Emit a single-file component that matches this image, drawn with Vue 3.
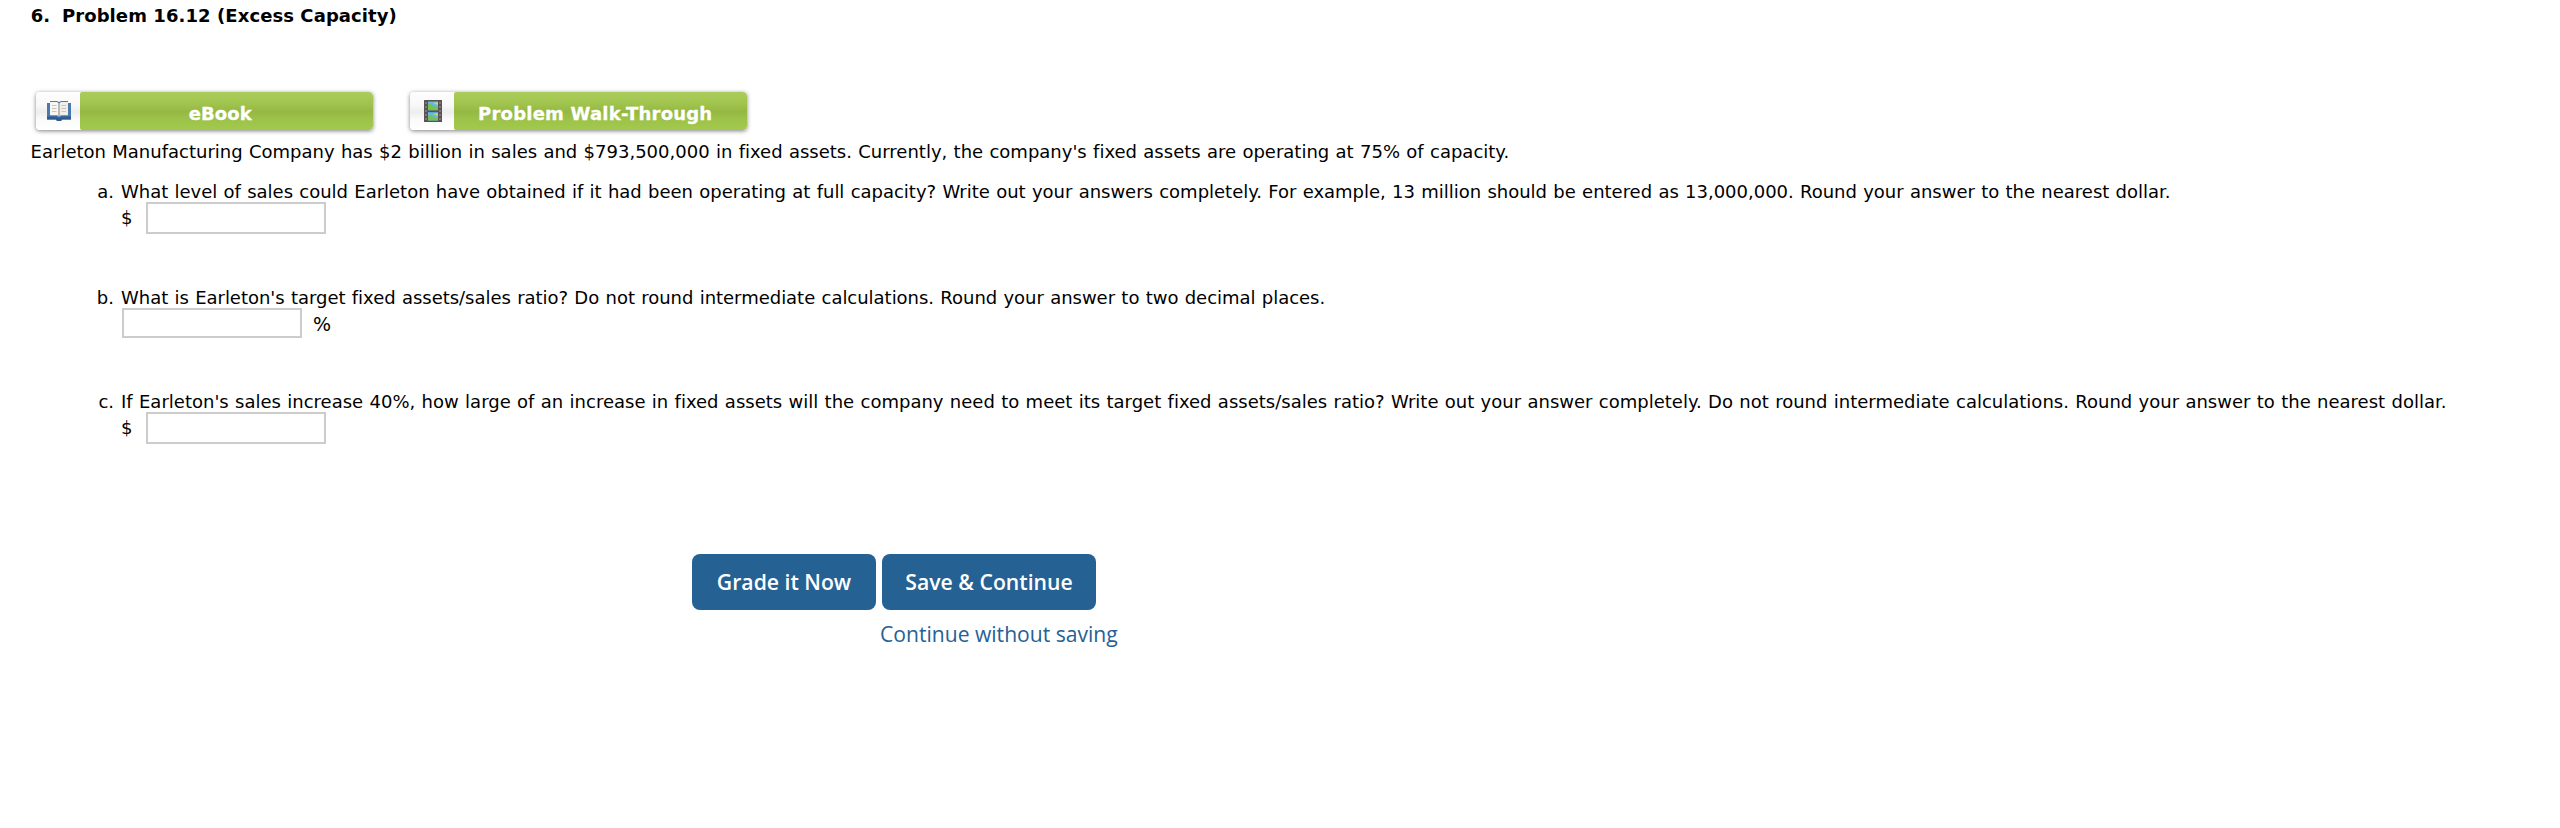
<script setup>
const resources = [
  { label: 'eBook', icon: 'book', tone: 'ebook' },
  { label: 'Problem Walk-Through', icon: 'film', tone: 'walk' }
]

const questions = [
  {
    id: 'a',
    unit: '$',
    text: 'What level of sales could Earleton have obtained if it had been operating at full capacity? Write out your answers completely. For example, 13 million should be entered as 13,000,000. Round your answer to the nearest dollar.'
  },
  {
    id: 'b',
    unit: '%',
    text: "What is Earleton's target fixed assets/sales ratio? Do not round intermediate calculations. Round your answer to two decimal places."
  },
  {
    id: 'c',
    unit: '$',
    text: "If Earleton's sales increase 40%, how large of an increase in fixed assets will the company need to meet its target fixed assets/sales ratio? Write out your answer completely. Do not round intermediate calculations. Round your answer to the nearest dollar."
  }
]
</script>

<template>
  <main class="page">
    <h1 class="title"><span class="number">6.</span><span>Problem 16.12 (Excess Capacity)</span></h1>

    <nav class="resources">
      <a v-for="r in resources" :key="r.label" class="resource">
        <span class="icon-cell">
          <svg v-if="r.icon === 'book'" class="icon" width="26" height="22" viewBox="0 0 26 22">
            <path d="M1 3h3v-2h7l2 1 2-1h7v2h3v16.500h-9l-1 1.500h-4l-1-1.500h-9z" fill="#4a79b0" />
            <path d="M1 16.500h9.500l2.500 1.500 2.500-1.500h9.500v3h-9l-1 1.500h-4l-1-1.500h-9z" fill="#2f5c90" />
            <path d="M4 2h7l2 1.500v13l-2-1.200h-7z" fill="#f8f6f2" />
            <path d="M22 2h-7l-2 1.500v13l2-1.200h7z" fill="#f1eeea" />
            <path d="M6 5.500h4.500M6 8.500h4.500M6 11.500h4.500M15.500 5.500h4.500M15.500 8.500h4.500M15.500 11.500h4.500" stroke="#c9c5c0" />
            <path d="M13 3v13" stroke="#aaa5a0" stroke-width="1.500" />
          </svg>
          <svg v-else class="icon" width="20" height="24" viewBox="0 0 20 24">
            <rect x="1" y="1" width="18" height="22" rx=".5" fill="#5a5255" />
            <rect x="5" y="2.500" width="10" height="8.700" fill="#65b8ec" />
            <rect x="5" y="13.200" width="10" height="8.300" fill="#65b8ec" />
            <path d="M5 5c4-1 5 3 10 3v3.200h-10zM5 16c4-1 5 3 10 3v2.500h-10z" fill="#74c253" />
            <path d="M10 4l5-1v3zM10 15l5-1v3z" fill="#c7d860" />
            <path d="M3 3v19M17 3v19" stroke="#8e878b" stroke-width="1.400" stroke-dasharray="2 2" />
          </svg>
        </span>
        <span class="resource-label" :class="r.tone">{{ r.label }}</span>
      </a>
    </nav>

    <p class="intro">
      Earleton Manufacturing Company has $2 billion in sales and $793,500,000 in fixed assets. Currently, the company's fixed assets are operating at 75% of capacity.
    </p>

    <ol class="questions">
      <li v-for="q in questions" :key="q.id" class="question" :class="'q-' + q.id">
        <span class="marker">{{ q.id }}.</span>
        <div>
          <p class="prompt">{{ q.text }}</p>
          <div class="answer">
            <span v-if="q.unit === '$'" class="dollar">$</span>
            <input class="field" type="text" />
            <span v-if="q.unit === '%'" class="percent">%</span>
          </div>
        </div>
      </li>
    </ol>

    <div class="actions">
      <button class="btn grade">Grade it Now</button>
      <div class="save-group">
        <button class="btn save">Save &amp; Continue</button>
        <a class="skip">Continue without saving</a>
      </div>
    </div>
  </main>
</template>

<style>
body {
  background: #fff;
}
</style>

<style scoped>
.page {
  box-sizing: border-box;
  height: 828px;
  padding: 6px 0 0 30px;
  color: #000;
  font: 18px/20px Verdana, "DejaVu Sans", sans-serif;
  font-variant-ligatures: none;
  white-space: nowrap;
  overflow: hidden;
}
.title {
  display: flex;
  margin: 0 0 0 0.7px;
  font-size: 18px;
  line-height: 20px;
  letter-spacing: 0.08px;
}
.number {
  width: 31.300px;
}
.resources {
  display: flex;
  gap: 37px;
  margin: 66px 0 0 6px;
}
.resource {
  display: flex;
  width: 337px;
  height: 38px;
  border-radius: 4px;
  box-shadow: 0 1px 4px rgba(0, 0, 0, 0.5);
  overflow: hidden;
}
.icon-cell {
  display: flex;
  align-items: center;
  justify-content: center;
  box-sizing: border-box;
  width: 43.500px;
  padding-left: 2px;
  background: linear-gradient(#fefefe 0%, #f8f8f8 35%, #ededed 53%, #fafafa 72%, #fff 100%);
}
.icon {
  display: block;
}
.resource-label {
  flex: 1;
  padding-top: 12px;
  border-radius: 2px 4px 4px 2px;
  background: linear-gradient(#abcc5b 0%, #a1c44e 30%, #95b843 52%, #9dc249 70%, #a2c84c 100%);
  color: #fff;
  font-weight: bold;
  text-align: center;
  -webkit-text-stroke: 0.3px #fff;
}
.ebook {
  padding-right: 12px;
  letter-spacing: 0.1px;
}
.walk {
  padding-right: 10px;
  letter-spacing: 0.22px;
}
.intro {
  margin: 12px 0 0 0.6px;
  word-spacing: 0.61px;
}
.questions {
  margin: 20px 0 0;
  padding: 0;
  list-style: none;
}
.question {
  display: grid;
  grid-template-columns: 84px 1fr;
  column-gap: 7px;
  height: 106px;
}
.q-b {
  height: 104px;
}
.marker {
  text-align: right;
}
.prompt {
  margin: 0;
  word-spacing: 0.61px;
}
.q-a .prompt {
  letter-spacing: -0.015px;
}
.q-b .prompt {
  letter-spacing: -0.024px;
}
.q-c .prompt {
  letter-spacing: 0.005px;
}
.answer {
  display: flex;
}
.dollar {
  width: 25px;
  padding-top: 6px;
}
.percent {
  padding: 6px 0 0 11px;
  font-size: 19px;
}
.field {
  box-sizing: border-box;
  width: 180px;
  height: 32px;
  margin: 0;
  padding: 0 6px;
  border: 2px solid #ccc;
  border-radius: 0;
  background: #fff;
  font: inherit;
}
.q-b .field {
  height: 30px;
  margin-left: 1px;
}
.actions {
  display: flex;
  gap: 6px;
  margin: 56px 0 0 662px;
  font-family: "Open Sans", sans-serif;
}
.btn {
  display: block;
  height: 56px;
  margin: 0;
  padding: 0;
  border: 0;
  border-radius: 8px;
  background: #256193;
  color: #fff;
  font: 600 21.200px/56px "Open Sans", sans-serif;
}
.grade {
  width: 184px;
}
.save {
  width: 214px;
}
.skip {
  display: block;
  margin: 10px 0 0 -2px;
  color: #256193;
  font-size: 21.100px;
  line-height: 28px;
}
</style>
